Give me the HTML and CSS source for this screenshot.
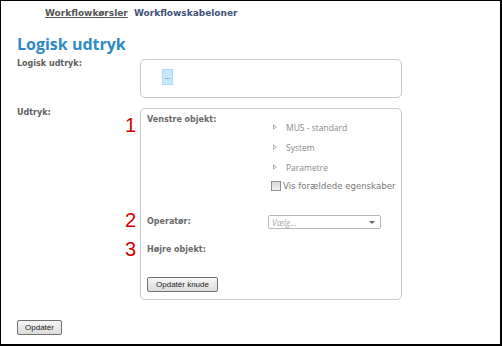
FILE: index.html
```
<!DOCTYPE html>
<html lang="da">
<head>
<meta charset="utf-8">
<title>Logisk udtryk</title>
<link rel="stylesheet" href="styles.css">
</head>
<body>
<div class="frame">
  <nav class="nav">
    <a class="nav-link current" href="#">Workflowkørsler</a>
    <a class="nav-link" href="#">Workflowskabeloner</a>
  </nav>
  <h1 class="title">Logisk udtryk</h1>
  <div class="form">
    <div class="label">Logisk udtryk:</div>
    <div class="box box-expr">
      <button class="dots" type="button">...</button>
    </div>
    <div class="label">Udtryk:</div>
    <div class="box box-edit">
      <div class="row row-left">
        <span class="marker">1</span>
        <div class="sublabel">Venstre objekt:</div>
        <div class="value">
          <ul class="tree">
            <li class="tree-item"><span class="arrow"></span>MUS - standard</li>
            <li class="tree-item"><span class="arrow"></span>System</li>
            <li class="tree-item"><span class="arrow"></span>Parametre</li>
          </ul>
          <label class="check"><span class="checkbox"></span>Vis forældede egenskaber</label>
        </div>
      </div>
      <div class="row row-op">
        <span class="marker m2">2</span>
        <div class="sublabel">Operatør:</div>
        <div class="value">
          <div class="select"><span class="placeholder">Vælg...</span><span class="caret"></span></div>
        </div>
      </div>
      <div class="row row-right">
        <span class="marker m3">3</span>
        <div class="sublabel">Højre objekt:</div>
      </div>
      <div class="actions">
        <button class="btn btn-node" type="button">Opdatér knude</button>
      </div>
    </div>
  </div>
  <div class="footer">
    <button class="btn btn-update" type="button">Opdatér</button>
  </div>
</div>
</body>
</html>
```

FILE: styles.css
```
html, body {
  margin: 0;
  padding: 0;
  background: #fff;
}

.frame {
  box-sizing: border-box;
  width: 502px;
  height: 346px;
  border-style: solid;
  border-color: #000;
  border-width: 1px 2px 2px 1px;
  font-family: "DejaVu Sans", Verdana, sans-serif;
  overflow: hidden;
}

.nav {
  padding: 5px 0 0 44px;
  height: 14px;
  line-height: 14px;
  font-size: 9px;
  font-weight: bold;
}

.nav-link {
  color: #3f5278;
  text-decoration: none;
  margin-right: 3px;
}

.nav-link.current {
  color: #555;
  text-decoration: underline;
}

.title {
  margin: 14px 0 0 16px;
  font-family: "Open Sans", sans-serif;
  font-size: 16px;
  line-height: 20px;
  font-weight: bold;
  color: #2c8ac6;
}

.form {
  margin-top: 5px;
  padding-left: 16px;
  display: grid;
  grid-template-columns: 123px 262px;
  row-gap: 10px;
}

.label {
  font-size: 8px;
  font-weight: bold;
  color: #5e5e5e;
  line-height: 10px;
}

.box {
  box-sizing: border-box;
  border: 1px solid #c9c9c9;
  border-radius: 5px;
  background: #fff;
}

.box-expr {
  height: 39px;
  padding: 9px 0 0 21px;
}

.dots {
  display: block;
  box-sizing: border-box;
  width: 11px;
  height: 16px;
  padding: 0;
  margin: 0;
  border: 1px solid #a8dbf8;
  background: #c6e8fc;
  border-radius: 0;
  font-family: "Liberation Sans", sans-serif;
  font-size: 7px;
  line-height: 14px;
  color: #334;
}

.box-edit {
  padding: 5px 0 7px 6px;
}

.row {
  position: relative;
  display: grid;
  grid-template-columns: 121px 1fr;
}

.marker {
  position: absolute;
  left: -22px;
  top: 1px;
  font-family: "Liberation Sans", Arial, sans-serif;
  font-size: 20px;
  line-height: 20px;
  color: #d10000;
}

.marker.m2 { top: -3px; }
.marker.m3 { top: -5px; }

.sublabel {
  font-size: 8px;
  font-weight: bold;
  color: #6a6a6a;
  line-height: 12px;
}

.tree {
  list-style: none;
  margin: 3px 0 0 0;
  padding: 0;
}

.tree-item {
  display: flex;
  align-items: center;
  height: 20px;
  padding-left: 5px;
  font-family: "Open Sans", sans-serif;
  font-size: 8.5px;
  color: #8a8a8a;
}

.arrow {
  width: 0;
  height: 0;
  border-style: solid;
  border-width: 3px 0 3px 4px;
  border-color: transparent transparent transparent #b0b0b0;
  margin-right: 9px;
  position: relative;
}

.arrow::after {
  content: "";
  position: absolute;
  left: -3px;
  top: -1.5px;
  border-style: solid;
  border-width: 1.5px 0 1.5px 2px;
  border-color: transparent transparent transparent #fff;
}

.check {
  display: flex;
  align-items: center;
  height: 18px;
  padding-left: 3px;
  font-size: 8.6px;
  color: #777;
}

.checkbox {
  box-sizing: border-box;
  width: 10px;
  height: 10px;
  border: 1px solid #8f8f8f;
  background: linear-gradient(#d8d8d8, #f2f2f2);
  margin-right: 2px;
}

.row-op {
  margin-top: 18px;
  height: 18px;
  align-items: center;
}

.select {
  box-sizing: border-box;
  width: 113px;
  height: 14px;
  border: 1px solid #b8b8b8;
  border-radius: 2px;
  display: flex;
  align-items: center;
  justify-content: space-between;
  padding: 0 5px 0 3px;
}

.placeholder {
  font-family: "Open Sans", sans-serif;
  font-style: italic;
  font-size: 8.5px;
  color: #aaa;
}

.caret {
  width: 0;
  height: 0;
  border-style: solid;
  border-width: 3px 3px 0 3px;
  border-color: #666 transparent transparent transparent;
}

.row-right {
  margin-top: 13px;
}

.actions {
  display: flex;
  margin-top: 21px;
}

.btn {
  box-sizing: border-box;
  height: 15px;
  padding: 0;
  margin: 0;
  border: 1px solid #707070;
  border-radius: 2px;
  background: linear-gradient(#f6f6f6, #dcdcdc);
  font-family: "Liberation Sans", Arial, sans-serif;
  font-size: 8px;
  line-height: 13px;
  color: #222;
}

.btn-node {
  width: 71px;
}

.footer {
  display: flex;
  margin-top: 20px;
  padding-left: 16px;
}

.btn-update {
  width: 45px;
}
```
